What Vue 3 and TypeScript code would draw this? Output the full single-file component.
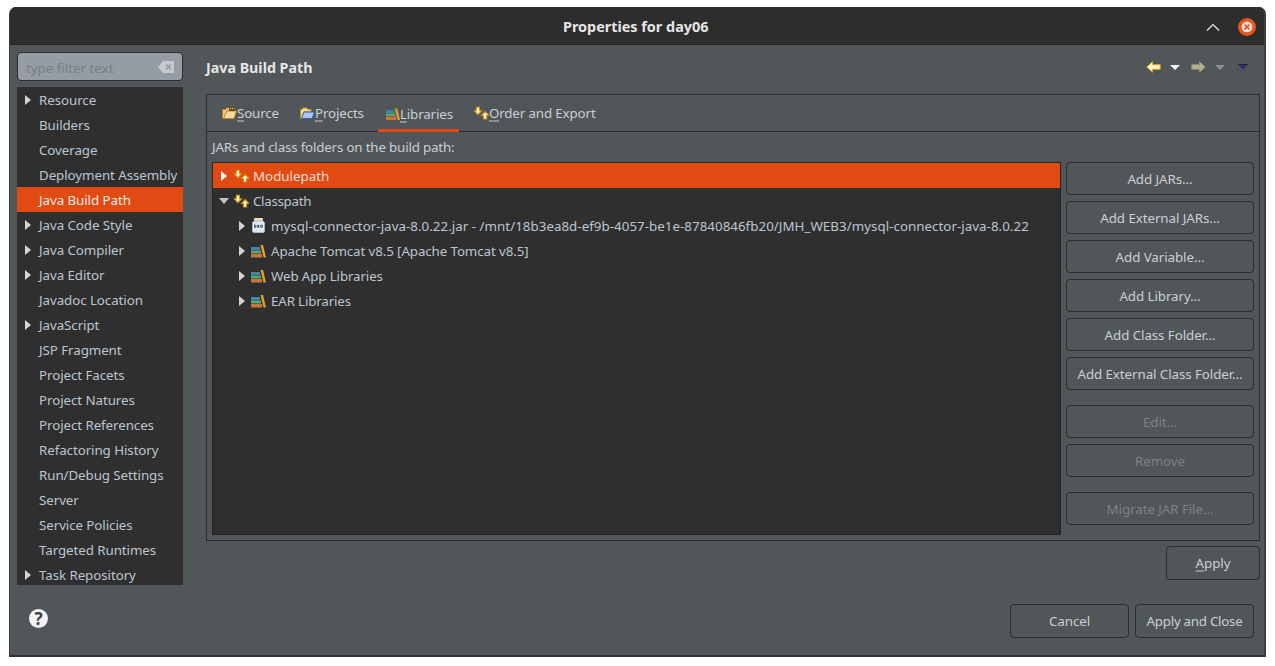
<script setup lang="ts">
interface Node {
  label: string;
  arrow: boolean;
  selected?: boolean;
}

const pages: Node[] = [
  { label: "Resource", arrow: true },
  { label: "Builders", arrow: false },
  { label: "Coverage", arrow: false },
  { label: "Deployment Assembly", arrow: false },
  { label: "Java Build Path", arrow: false, selected: true },
  { label: "Java Code Style", arrow: true },
  { label: "Java Compiler", arrow: true },
  { label: "Java Editor", arrow: true },
  { label: "Javadoc Location", arrow: false },
  { label: "JavaScript", arrow: true },
  { label: "JSP Fragment", arrow: false },
  { label: "Project Facets", arrow: false },
  { label: "Project Natures", arrow: false },
  { label: "Project References", arrow: false },
  { label: "Refactoring History", arrow: false },
  { label: "Run/Debug Settings", arrow: false },
  { label: "Server", arrow: false },
  { label: "Service Policies", arrow: false },
  { label: "Targeted Runtimes", arrow: false },
  { label: "Task Repository", arrow: true },
];

// track: per label letter spacing, the reference text is hinted so widths differ a bit
const entries = [
  { label: "mysql-connector-java-8.0.22.jar - /mnt/18b3ea8d-ef9b-4057-be1e-87840846fb20/JMH_WEB3/mysql-connector-java-8.0.22", icon: "jar", track: 0.035 },
  { label: "Apache Tomcat v8.5 [Apache Tomcat v8.5]", icon: "lib", track: -0.1 },
  { label: "Web App Libraries", icon: "lib", track: -0.12 },
  { label: "EAR Libraries", icon: "lib", track: -0.15 },
];

const buttonGroups = [
  [
    { label: "Add JARs...", off: false },
    { label: "Add External JARs...", off: false },
    { label: "Add Variable...", off: false },
    { label: "Add Library...", off: false },
    { label: "Add Class Folder...", off: false },
    { label: "Add External Class Folder...", off: false },
  ],
  [
    { label: "Edit...", off: true },
    { label: "Remove", off: true },
  ],
  [{ label: "Migrate JAR File...", off: true }],
];
</script>

<template>
  <div class="page">
    <main class="window">
      <header class="titlebar">
        <span class="title">Properties for day06</span>
        <svg class="chevron" width="14" height="8" viewBox="0 0 14 8">
          <path d="M1 7.5 7 1.5l6 6" fill="none" stroke="#e8e8e8" stroke-width="1.2" />
        </svg>
        <svg class="close" width="18" height="18" viewBox="0 0 18 18">
          <circle cx="9" cy="9" r="9" fill="#e95420" />
          <circle cx="9" cy="9" r="5.4" fill="#f6e3da" />
          <path d="M6.6 6.6l4.8 4.8M11.4 6.6l-4.8 4.8" stroke="#e95420" stroke-width="1.5" />
        </svg>
      </header>

      <div class="body">
        <div class="columns">
          <aside class="side">
            <div class="filter">
              <span class="filter-text">type filter text</span>
              <svg width="16" height="12" viewBox="0 0 16 12">
                <path d="M5 0h11v12H5L0 6z" fill="#c6cacd" />
                <path d="M8 3.5l5 5M13 3.5l-5 5" stroke="#8f969d" stroke-width="1.4" />
              </svg>
            </div>
            <div class="page-tree">
              <div v-for="p in pages" :key="p.label" class="page-row" :class="{ selected: p.selected }">
                <svg v-if="p.arrow" class="twisty" width="6" height="10" viewBox="0 0 6 10">
                  <path d="M0 0l6 5-6 5z" fill="#d4d4d4" />
                </svg>
                <span>{{ p.label }}</span>
              </div>
            </div>
          </aside>

          <section class="content">
            <div class="content-head">
              <h1>Java Build Path</h1>
              <div class="nav">
                <svg class="nav-back" width="15" height="12" viewBox="0 0 15 12">
                  <path d="M.8 6 6.500.8v2.900h7.700v4.600H6.500v2.900z" fill="#fff3c4" stroke="#e0a526" />
                </svg>
                <svg class="nav-drop" width="10" height="5" viewBox="0 0 10 5"><path d="M0 0h10L5 5z" fill="#f4f4f4" /></svg>
                <svg class="nav-forward" width="15" height="12" viewBox="0 0 15 12">
                  <path d="M14.200 6 8.500.8v2.900H.8v4.600h7.700v2.900z" fill="#b5b096" stroke="#94907a" />
                </svg>
                <svg class="nav-drop2" width="10" height="5" viewBox="0 0 10 5"><path d="M0 0h10L5 5z" fill="#8f8f8f" /></svg>
                <svg class="nav-menu" width="10" height="6" viewBox="0 0 10 6"><path d="M0 0h10L5 6z" fill="#3c2a70" /><path d="M0 0h10v1H0z" fill="#242424" /></svg>
              </div>
            </div>

            <div class="tabs">
              <nav class="tab-row">
                <div class="tab">
                  <svg width="15" height="14" viewBox="0 0 15 14">
                    <path d="M.5 12.500V3.500h3l1-1.500h3v3h-2l-2 7.500z" fill="#f0c674" stroke="#b9802f" />
                    <path d="M5 5h9.500l-2.500 7.500H1.500z" fill="#f9dc9c" stroke="#b9802f" />
                    <path d="M7 1h6v4H7z" fill="#6d4a22" />
                    <path d="M8 2h1v1H8zM10 2h1v1h-1zM12 2h.5v1H12z" fill="#f9dc9c" />
                  </svg>
                  <span class="tab-text"><u>S</u>ource</span>
                </div>
                <div class="tab">
                  <svg width="15" height="14" viewBox="0 0 15 14">
                    <path d="M.5 12.500V3.500h1.500l1-1.500h4l1 1.500h3V6h-7l-2 6.500z" fill="#f0d896" stroke="#b9902f" />
                    <path d="M4 6h10.500l-2.500 6.500H1.500z" fill="#a8c8f0" stroke="#3b5fb0" />
                  </svg>
                  <span class="tab-text"><u>P</u>rojects</span>
                </div>
                <div class="tab active">
                  <svg width="15" height="14" viewBox="0 0 15 14">
                    <path d="M0 3h9v3H0z" fill="#3f86a8" />
                    <path d="M0 6.500h10v3H0z" fill="#5fa86a" />
                    <path d="M0 10h11v3.500H0z" fill="#c8743c" />
                    <path d="M9.500 1h2.500l3 12.500h-2.500z" fill="#e8a020" />
                  </svg>
                  <span class="tab-text"><u>L</u>ibraries</span>
                </div>
                <div class="tab">
                  <svg width="15" height="14" viewBox="0 0 16 14">
                    <path d="M2.500 .8h3.400v3.700h2.300L4.200 8.800 .2 4.500h2.300z" fill="#fff3c0" stroke="#d0921a" stroke-width="1.1" />
                    <path d="M10.100 13.400V9.600H7.800L11.900 5.300l4 4.300h-2.400v3.800z" fill="#fff3c0" stroke="#d0921a" stroke-width="1.1" />
                  </svg>
                  <span class="tab-text"><u>O</u>rder and Export</span>
                </div>
              </nav>

              <div class="tab-body">
                <p class="caption">JARs and class folders on the build path:</p>
                <div class="split">
                  <div class="path-tree">
                    <div class="row selected">
                      <svg class="twisty" width="6" height="10" viewBox="0 0 6 10"><path d="M0 0l6 5-6 5z" fill="#fff" /></svg>
                      <svg class="row-icon" width="15" height="14" viewBox="0 0 16 14">
                        <path d="M2.500 .8h3.400v3.700h2.300L4.200 8.800 .2 4.500h2.300z" fill="#fff3c0" stroke="#d0921a" stroke-width="1.1" />
                        <path d="M10.100 13.400V9.600H7.800L11.900 5.300l4 4.300h-2.400v3.800z" fill="#fff3c0" stroke="#d0921a" stroke-width="1.1" />
                      </svg>
                      <span class="row-label">Modulepath</span>
                    </div>
                    <div class="row opened">
                      <svg class="twisty" width="10" height="6" viewBox="0 0 10 6"><path d="M0 0h10L5 6z" fill="#c8c8c8" /></svg>
                      <svg class="row-icon" width="15" height="14" viewBox="0 0 16 14">
                        <path d="M2.500 .8h3.400v3.700h2.300L4.200 8.800 .2 4.500h2.300z" fill="#fff3c0" stroke="#d0921a" stroke-width="1.1" />
                        <path d="M10.100 13.400V9.600H7.800L11.900 5.300l4 4.300h-2.400v3.800z" fill="#fff3c0" stroke="#d0921a" stroke-width="1.1" />
                      </svg>
                      <span class="row-label classpath">Classpath</span>
                    </div>
                    <div v-for="e in entries" :key="e.label" class="row child">
                      <svg class="twisty" width="6" height="10" viewBox="0 0 6 10"><path d="M0 0l6 5-6 5z" fill="#d4d4d4" /></svg>
                      <svg v-if="e.icon === 'jar'" class="row-icon" width="15" height="15" viewBox="0 0 15 15">
                        <rect x="3" y="0" width="9" height="3" rx="1" fill="#ecdcb0" />
                        <path d="M3 3h9l1.500 1.500V13a1.500 1.500 0 0 1-1.500 1.500H3A1.500 1.500 0 0 1 1.500 13V4.500z" fill="#dde8f6" stroke="#a5b6ce" />
                        <path d="M2 6h11v4.500H2z" fill="#f6f9fd" />
                        <path d="M3 6.800h2.400v3H3zM6.400 6.800h1.800v3H6.400zM9.300 6.800h2.500v3H9.300z" fill="#33415a" />
                        <path d="M3.900 7.600h.6v1.400h-.6zM10.200 7.600h.6v1.400h-.6z" fill="#f6f9fd" />
                      </svg>
                      <svg v-else class="row-icon" width="15" height="14" viewBox="0 0 15 14">
                        <path d="M0 3h9v3H0z" fill="#3f86a8" />
                        <path d="M0 6.500h10v3H0z" fill="#5fa86a" />
                        <path d="M0 10h11v3.500H0z" fill="#c8743c" />
                        <path d="M9.500 1h2.500l3 12.500h-2.500z" fill="#e8a020" />
                      </svg>
                      <span class="row-label" :style="{ letterSpacing: `${e.track}px` }">{{ e.label }}</span>
                    </div>
                  </div>

                  <div class="buttons">
                    <div v-for="(group, i) in buttonGroups" :key="i" class="button-group">
                      <button v-for="b in group" :key="b.label" class="btn" :class="{ off: b.off }">{{ b.label }}</button>
                    </div>
                  </div>
                </div>
              </div>
            </div>

            <div class="apply-row">
              <button class="btn apply"><u>A</u>pply</button>
            </div>
          </section>
        </div>

        <footer class="footer">
          <div class="help"><span>?</span></div>
          <div class="footer-buttons">
            <button class="btn cancel">Cancel</button>
            <button class="btn cancel tight">Apply and Close</button>
          </div>
        </footer>
      </div>
    </main>
  </div>
</template>

<style>
html,
body {
  margin: 0;
  background: #fff;
}
</style>

<style scoped>
.page {
  width: 1275px;
  height: 666px;
  padding: 7px 9px 9px;
  box-sizing: border-box;
  font-family: "Noto Sans", sans-serif;
  font-size: 13.33px;
  color: #c9d0d6;
  overflow: hidden;
}

.window {
  height: 650px;
  display: flex;
  flex-direction: column;
  background: #515658;
  border-radius: 7px 7px 0 0;
  overflow: hidden;
  border-right: 2px solid #3a3d3f;
  border-left: 1px solid #3a3d3f;
  border-bottom: 2px solid #333;
  box-sizing: border-box;
}

.titlebar {
  height: 38px;
  flex-shrink: 0;
  background: #2d2d2d;
  border-bottom: 1px solid #222;
  box-sizing: border-box;
  display: flex;
  align-items: center;
  padding-left: 553px;
  padding-top: 2px;
}

.title {
  width: 636px;
  font-weight: 700;
  font-size: 14.4px;
  color: #e6e6e6;
}

.chevron {
  margin-left: 7px;
}

.close {
  margin-left: 18px;
}

.body {
  flex: 1;
  display: flex;
  flex-direction: column;
  padding: 7px 4px 0 7px;
  min-height: 0;
}

.columns {
  display: flex;
  gap: 23px;
}

.side {
  width: 166px;
  flex-shrink: 0;
}

.filter {
  height: 29px;
  box-sizing: border-box;
  border: 1px solid #2c2c2c;
  border-radius: 4px;
  background: #959ca4;
  color: #787f86;
  display: flex;
  align-items: center;
  justify-content: space-between;
  padding: 0 8px;
  margin-bottom: 6px;
}

.filter-text {
  padding-top: 2px;
}

.page-tree {
  height: 498px;
  overflow: hidden;
  background: #2f2f2f;
}

.page-row {
  height: 25px;
  display: flex;
  align-items: center;
  padding-left: 22px;
  position: relative;
  color: #bcc6cf;
  white-space: nowrap;
  letter-spacing: -0.07px;
}

.page-row .twisty {
  position: absolute;
  left: 8px;
  top: 8px;
}

.page-row.selected {
  background: #e04b14;
  color: #f4e9e4;
}

.content {
  flex: 1;
  min-width: 0;
}

.content-head {
  height: 42px;
  display: flex;
  align-items: flex-start;
  justify-content: space-between;
}

h1 {
  margin: 5px 0 0;
  font-size: 14.25px;
  line-height: 22px;
  font-weight: 700;
  color: #e6e6e6;
}

.nav {
  display: flex;
  align-items: center;
  margin: 9px 12px 0 0;
}

.nav-drop {
  margin: 0 11px 0 9px;
}

.nav-drop2 {
  margin: 0 13px 0 9px;
}

.tabs {
  height: 447px;
  box-sizing: border-box;
  border: 1px solid #2c2c2c;
  display: flex;
  flex-direction: column;
}

.tab-row {
  height: 37px;
  flex-shrink: 0;
  box-sizing: border-box;
  border-bottom: 1px solid #2c2c2c;
  display: flex;
  padding-left: 7px;
}

.tab {
  display: flex;
  align-items: center;
  padding: 0 7px 0 8px;
  height: 36px;
  box-sizing: border-box;
  color: #c9d0d6;
}

.tab + .tab {
  margin-left: 6px;
}

.tab.active {
  height: 37px;
  margin-left: 7px;
  margin-right: 1px;
  border-bottom: 3px solid #e04b14;
  padding-top: 3px;
  padding-left: 8px;
  padding-right: 6px;
}

.tab.active svg {
  width: 14px;
}

.tab svg {
  flex-shrink: 0;
}

.tab-text {
  letter-spacing: -0.13px;
}

u {
  text-decoration: underline;
  text-decoration-color: #8b9094;
  text-underline-offset: 2px;
  text-decoration-thickness: 1.5px;
}

.tab-body {
  flex: 1;
  min-height: 0;
  padding: 5px;
  display: flex;
  flex-direction: column;
}

.caption {
  margin: 0 0 5px;
  height: 20px;
  line-height: 20px;
  color: #c9d0d6;
  letter-spacing: -0.17px;
}

.split {
  flex: 1;
  min-height: 0;
  display: flex;
  gap: 5px;
}

.path-tree {
  width: 849px;
  box-sizing: border-box;
  background: #2f2f2f;
  border: 1px solid #252525;
  flex-shrink: 0;
}

.row {
  height: 25px;
  display: flex;
  align-items: center;
  color: #bcc6cf;
  white-space: nowrap;
  padding-left: 8px;
}

.row .twisty {
  flex-shrink: 0;
  margin-right: 3px;
}

.row.opened {
  padding-left: 6px;
}

.row.opened .twisty {
  margin-right: 1px;
}

.row-icon {
  margin-left: 4px;
  margin-right: 4px;
  flex-shrink: 0;
}

.classpath {
  letter-spacing: -0.3px;
}

.row.selected {
  background: #e04b14;
  color: #f8dcd2;
}

.row.child {
  padding-left: 26px;
}

.row.child .row-icon {
  margin-left: 3px;
  margin-right: 5px;
}

.buttons {
  width: 188px;
  display: flex;
  flex-direction: column;
  gap: 15px;
}

.button-group {
  display: flex;
  flex-direction: column;
  gap: 6px;
}

.btn {
  height: 33px;
  padding: 0;
  box-sizing: border-box;
  background: #515658;
  border: 1px solid #2c2c2c;
  border-radius: 4px;
  font-family: inherit;
  font-size: 13.33px;
  color: #c9d0d6;
  letter-spacing: -0.07px;
}

.btn.off {
  color: #7d8286;
}

.apply-row {
  display: flex;
  justify-content: flex-end;
  margin-top: 5px;
}

.apply {
  width: 94px;
  height: 34px;
}

.footer {
  display: flex;
  align-items: flex-start;
  justify-content: space-between;
  margin-top: 19px;
  padding-left: 12px;
  padding-right: 6px;
}

.help {
  width: 19px;
  height: 19px;
  margin-top: 5px;
  border-radius: 50%;
  background: #f2f4f8;
  color: #3c4046;
  font-weight: 700;
  font-size: 17px;
  line-height: 19px;
  text-align: center;
}

.footer-buttons {
  display: flex;
  gap: 6px;
}

.cancel {
  width: 119px;
  height: 34px;
}

.tight {
  letter-spacing: -0.27px;
}
</style>
